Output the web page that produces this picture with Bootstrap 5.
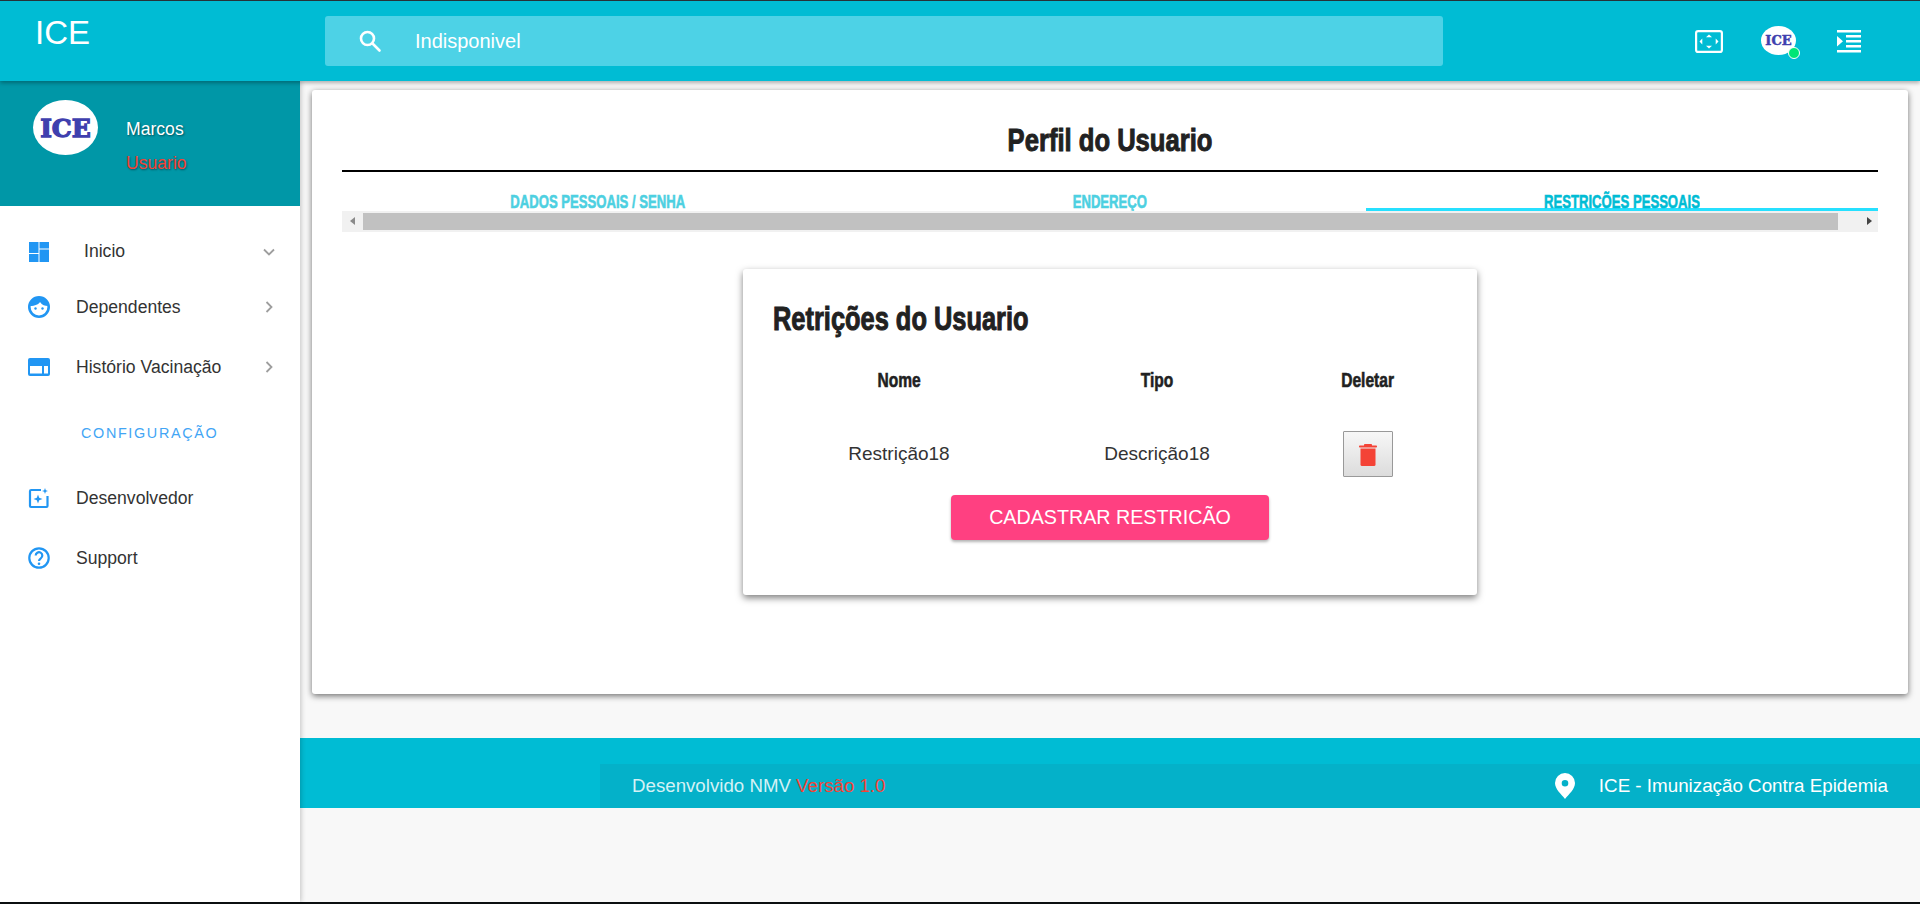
<!DOCTYPE html>
<html lang="pt-BR">
<head>
<meta charset="utf-8">
<title>ICE - Perfil do Usuario</title>
<link href="https://cdn.jsdelivr.net/npm/bootstrap@5.3.0/dist/css/bootstrap.min.css" rel="stylesheet">
<style>
html,body{height:100%;}
body{font-family:"Liberation Sans",Arial,sans-serif;background:#f8f8f8;color:#333;overflow:hidden;border-top:1px solid #263238;border-bottom:2px solid #0b0f10;}
.imp{font-family:"Liberation Sans",Arial,sans-serif;font-weight:700;-webkit-text-stroke:.6px currentColor;}
.ptitle.imp,.intitle.imp{-webkit-text-stroke:1px currentColor;}
.cond{display:inline-block;white-space:nowrap;}
.cond-title{transform:scaleX(.8);}
.cond-in{transform:scaleX(.77);transform-origin:left center;}
.cond-tab{transform:scaleX(.69);}
.cond-th{transform:scaleX(.74);}
.shell{height:100%;}
.topbar{height:80px;background:#00bcd4;box-shadow:0 2px 4px rgba(0,0,0,.3);position:relative;z-index:3;flex:none;}
.brand{width:325px;padding:14px 0 0 35px;font-size:33px;line-height:36px;color:#fff;}
.searchbox{width:1118px;height:50px;margin-top:15px;background:#4dd2e6;border-radius:3px;color:#fff;font-size:20px;padding-left:33px;}
.searchbox span{margin-left:33px;}
.topicons{margin-left:auto;padding-right:59px;}
.tfull{margin-top:29px;margin-right:38px;}
.tmenu{margin-top:29px;margin-left:41px;}
.avatarwrap{position:relative;width:35px;height:29px;margin-top:25px;}
.dot{position:absolute;right:-4px;bottom:-4px;width:12px;height:12px;border-radius:50%;background:#00e676;border:1px solid #fff;}
.sidebar{width:300px;background:#fff;flex:none;box-shadow:1px 0 5px rgba(0,0,0,.22);position:relative;z-index:2;}
.profile{height:125px;background:#0097a7;padding:19px 0 0 33px;}
.pname{margin-left:28px;padding-top:17px;font-size:17.6px;text-shadow:1px 1px 2px rgba(0,0,0,.45);}
.pname div{height:34px;line-height:24px;color:#fff;}
.pname div+div{color:#f44336;}
.menu-ice{list-style:none;margin:0;padding:0;}
.menu-top{padding-top:18px;}
.mitem{display:flex;align-items:center;padding-left:28px;padding-right:25px;font-size:17.6px;color:#333;height:60px;}
.mh55{height:55px;}
.mh56{height:56px;}
.mh64{height:64px;}
.mitem svg.ic{width:22px;height:22px;flex:none;margin-right:26px;}
.mitem svg.ic.ic-wide{margin-right:34px;}
.mitem svg.ch{margin-left:auto;flex:none;}
.mitem svg.chr{margin-right:2px;}
.sect{padding-left:81px;color:#42a5f5;font-size:14.4px;letter-spacing:1.65px;line-height:20px;margin-top:24px;margin-bottom:25px;}
.mainarea{min-width:0;}
.panel-ice{height:604px;margin:9px 12px 0 12px;border:0;border-radius:3px;box-shadow:0 2px 6px rgba(0,0,0,.55);padding:0 30px;flex:none;}
.ptitle{font-size:32px;line-height:36px;text-align:center;color:#212121;margin:0;padding-top:32px;height:82px;border-bottom:2px solid #000;}
.tabs-ice{margin-top:18px;height:21px;overflow:hidden;}
.tabs-ice .nav-item{flex:1 1 0;text-align:center;font-size:19px;line-height:19px;color:#4dd0e1;text-transform:uppercase;padding-top:2px;height:21px;}
.tabs-ice .act{color:#00bcd4;box-shadow:inset 0 -3px 0 #26e0ff;}
.sbar{height:21px;background:#f1f1f1;padding:2px 0;}
.sbar i{display:block;width:0;height:0;border-top:4px solid transparent;border-bottom:4px solid transparent;margin-top:4px;}
.sbar .al{border-right:5px solid #8a8a8a;margin-left:8px;margin-right:8px;}
.sbar .ar{border-left:5px solid #444;margin-left:29px;margin-right:6px;}
.sthumb{flex:1;background:#c1c1c1;}
.incard{width:734px;height:326px;margin:37px auto 0;border:0;border-radius:3px;box-shadow:0 3px 7px rgba(0,0,0,.5);padding:0 30px;}
.intitle{font-size:33px;line-height:40px;color:#212121;margin:0;padding-top:30px;height:90px;}
.tb{display:grid;grid-template-columns:252px 264px 158px;text-align:center;}
.th-ice{font-size:21px;line-height:24px;color:#212121;height:54px;padding-top:9px;}
.td-ice{font-size:19px;height:72px;padding-top:10px;display:flex;align-items:center;justify-content:center;color:#333;}
.delbtn{width:50px;height:46px;padding:0;border:1px solid #999;border-radius:1px;background:linear-gradient(#f7f7f7,#dcdcdc);display:flex;align-items:center;justify-content:center;}
.ctabtn{display:block;width:318px;height:45px;margin:10px auto 0;background:#ff4081;border:0;border-radius:4px;color:#fff;font-size:19.7px;line-height:45px;padding:0;box-shadow:0 2px 3px rgba(0,0,0,.3);}
.foot-ice{margin-top:44px;height:70px;background:#00bcd4;padding:26px 0 0 300px;flex:none;}
.foot-in{height:44px;background:#04b1c9;padding:0 32px;font-size:18.7px;color:#d4f1f5;}
.foot-in .red{color:#f44336;}
.foot-in .rgt{margin-left:auto;color:#fff;font-size:18.8px;}
.foot-in svg{margin-right:24px;}
</style>
</head>
<body>
<div class="shell d-flex flex-column">
  <header class="topbar d-flex">
    <div class="brand">ICE</div>
    <div class="searchbox d-flex align-items-center">
      <svg width="24" height="24" viewBox="0 0 24 24" fill="none" stroke="#fff" stroke-width="2.6" stroke-linecap="round"><circle cx="9.500" cy="9.500" r="6.500"/><path d="M14.500 14.500l7 7"/></svg>
      <span>Indisponivel</span>
    </div>
    <div class="topicons d-flex align-items-start">
      <svg class="tfull" width="28" height="23" viewBox="0 0 28 23" fill="#fff"><rect x="1.100" y="1.100" width="25.800" height="20.800" rx="2" fill="none" stroke="#fff" stroke-width="2.200"/><path d="M14 4.500l3 2.800h-6zM14 18.500l3-2.800h-6zM4.500 11.500L7.300 8.500v6zM23.500 11.500L20.700 8.500v6z"/></svg>
      <div class="avatarwrap">
        <svg width="35" height="29" viewBox="0 0 35 29"><ellipse cx="17.500" cy="14.500" rx="17.500" ry="14.500" fill="#fff"/><text x="17.500" y="19" text-anchor="middle" font-family="'DejaVu Serif',serif" font-weight="700" font-size="13" fill="#3f3fae" stroke="#3f3fae" stroke-width=".5">ICE</text></svg>
        <div class="dot"></div>
      </div>
      <svg class="tmenu" width="24" height="23" viewBox="0 0 24 23" fill="#fff"><rect width="24" height="2.500"/><rect x="9" y="5" width="15" height="2.500"/><rect x="9" y="10" width="15" height="2.500"/><rect x="9" y="15" width="15" height="2.500"/><rect y="20" width="24" height="2.500"/><path d="M0 6l6 5.200-6 5.200z"/></svg>
    </div>
  </header>
  <div class="d-flex flex-grow-1" style="min-height:0">
    <aside class="sidebar">
      <div class="profile d-flex">
        <svg width="65" height="55" viewBox="0 0 65 55"><ellipse cx="32.500" cy="27.500" rx="32.500" ry="27.500" fill="#fff"/><text x="32.500" y="36.500" text-anchor="middle" font-family="'DejaVu Serif',serif" font-weight="700" font-size="25" fill="#3f3fae" stroke="#3f3fae" stroke-width="1.300">ICE</text></svg>
        <div class="pname"><div>Marcos</div><div>Usuario</div></div>
      </div>
      <ul class="menu-ice menu-top">
        <li class="mitem mh55">
          <svg class="ic ic-wide" viewBox="0 0 22 22" fill="#2196f3"><rect x="1" y="1" width="9.500" height="11"/><rect x="11.500" y="1" width="9.500" height="6.500"/><rect x="1" y="13" width="9.500" height="8"/><rect x="11.500" y="8.500" width="9.500" height="12.500"/></svg>
          <span>Inicio</span>
          <svg class="ch" width="12" height="8" viewBox="0 0 12 8" fill="none" stroke="#9e9e9e" stroke-width="1.800"><path d="M1 1.500l5 5 5-5"/></svg>
        </li>
        <li class="mitem mh56">
          <svg class="ic" viewBox="0 0 22 22"><circle cx="11" cy="11" r="9.700" fill="#fff" stroke="#2196f3" stroke-width="2.600"/><path d="M2 10C3 4 7 1 11 1s8 3 9 9c-3 0-6-1-8-4-1 2-5 4-10 4z" fill="#2196f3"/><circle cx="7.500" cy="12.500" r="1.200" fill="#2196f3"/><circle cx="14.500" cy="12.500" r="1.200" fill="#2196f3"/></svg>
          <span>Dependentes</span>
          <svg class="ch chr" width="8" height="12" viewBox="0 0 8 12" fill="none" stroke="#9e9e9e" stroke-width="1.800"><path d="M1.500 1l5 5-5 5"/></svg>
        </li>
        <li class="mitem mh64">
          <svg class="ic" viewBox="0 0 22 22"><rect y="2" width="22" height="18" rx="2" fill="#2196f3"/><rect x="2" y="10" width="12" height="7.500" fill="#fff"/><rect x="16" y="10" width="4" height="7.500" fill="#fff"/></svg>
          <span>Histório Vacinação</span>
          <svg class="ch chr" width="8" height="12" viewBox="0 0 8 12" fill="none" stroke="#9e9e9e" stroke-width="1.800"><path d="M1.500 1l5 5-5 5"/></svg>
        </li>
      </ul>
      <div class="sect">CONFIGURAÇÃO</div>
      <ul class="menu-ice">
        <li class="mitem">
          <svg class="ic" viewBox="0 0 22 22" fill="none"><path d="M13 3H3.200A1.200 1.200 0 0 0 2 4.200V19a1 1 0 0 0 1 1h15.500a1 1 0 0 0 1-1V9" stroke="#2196f3" stroke-width="2.200"/><path d="M10 7.500l1.200 3.300 3.300 1.200-3.300 1.200L10 16.500l-1.200-3.300L5.500 12l3.300-1.200zM17 1l.8 2.200L20 4l-2.200.8L17 7l-.8-2.200L14 4l2.200-.8z" fill="#2196f3"/></svg>
          <span>Desenvolvedor</span>
        </li>
        <li class="mitem">
          <svg class="ic" viewBox="0 0 22 22" fill="none"><circle cx="11" cy="11" r="9.700" stroke="#2196f3" stroke-width="2.200"/><path d="M7.700 8.500A3.300 3.300 0 1 1 12.800 11.300c-1.200.8-1.800 1.300-1.800 2.700" stroke="#2196f3" stroke-width="2.200"/><circle cx="11" cy="16.800" r="1.300" fill="#2196f3"/></svg>
          <span>Support</span>
        </li>
      </ul>
    </aside>
    <main class="mainarea flex-grow-1 d-flex flex-column">
      <section class="card panel-ice">
        <h1 class="imp ptitle"><span class="cond cond-title">Perfil do Usuario</span></h1>
        <ul class="nav tabs-ice imp">
          <li class="nav-item"><span class="cond cond-tab">Dados Pessoais / Senha</span></li>
          <li class="nav-item"><span class="cond cond-tab">Endereço</span></li>
          <li class="nav-item act"><span class="cond cond-tab">Restricões Pessoais</span></li>
        </ul>
        <div class="sbar d-flex">
          <i class="al"></i><div class="sthumb"></div><i class="ar"></i>
        </div>
        <div class="card incard">
          <h2 class="imp intitle"><span class="cond cond-in">Retrições do Usuario</span></h2>
          <div class="tb">
            <div class="imp th-ice"><span class="cond cond-th">Nome</span></div><div class="imp th-ice"><span class="cond cond-th">Tipo</span></div><div class="imp th-ice"><span class="cond cond-th">Deletar</span></div>
            <div class="td-ice">Restrição18</div><div class="td-ice">Descrição18</div>
            <div class="td-ice"><button class="btn delbtn" type="button" aria-label="Deletar"><svg width="18" height="23" viewBox="0 0 18 23" fill="#f44336"><rect x="0" y="2.500" width="18" height="2" rx=".8"/><rect x="5" y="1" width="8" height="2.500" rx=".8"/><path d="M1.500 5.500h15v16a1.500 1.500 0 0 1-1.500 1.500H3a1.500 1.500 0 0 1-1.500-1.500z"/></svg></button></div>
          </div>
          <button class="btn ctabtn" type="button">CADASTRAR RESTRICÃO</button>
        </div>
      </section>
      <footer class="foot-ice">
        <div class="foot-in d-flex align-items-center">
          <span>Desenvolvido NMV <span class="red">Versão 1.0</span></span>
          <span class="rgt d-flex align-items-center">
            <svg width="20" height="26" viewBox="0 0 20 26"><path fill="#fff" fill-rule="evenodd" d="M10 0a10 10 0 0 1 10 10c0 6-6 11-10 16C6 21 0 16 0 10A10 10 0 0 1 10 0zm0 7a3.300 3.300 0 1 0 0 6.600A3.300 3.300 0 0 0 10 7z"/></svg>
            ICE - Imunização Contra Epidemia
          </span>
        </div>
      </footer>
    </main>
  </div>
</div>
<script src="https://cdn.jsdelivr.net/npm/bootstrap@5.3.0/dist/js/bootstrap.bundle.min.js"></script>
</body>
</html>
